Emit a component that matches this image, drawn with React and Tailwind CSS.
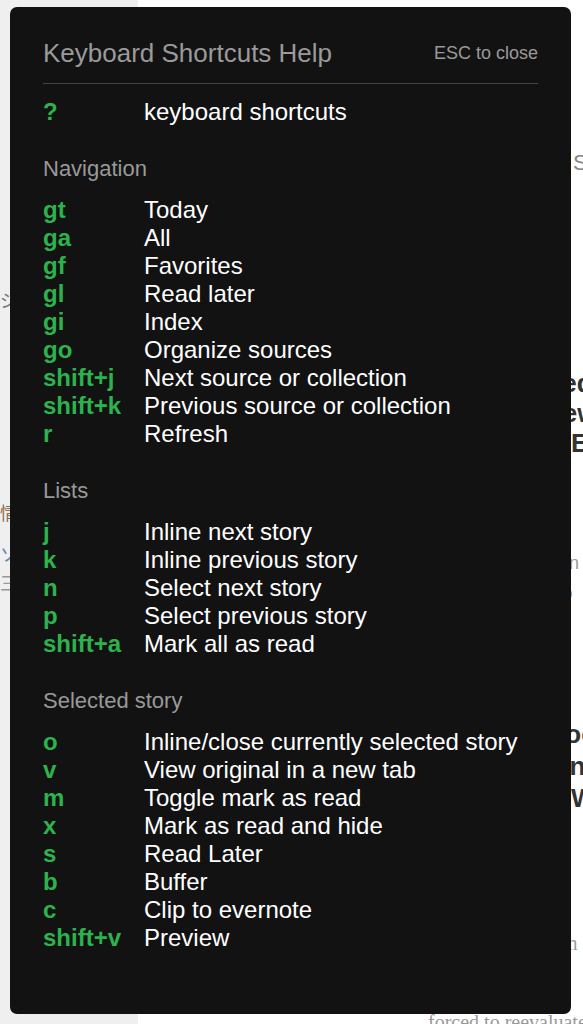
const sections = [
  {
    title: null,
    rows: [["?", "keyboard shortcuts"]],
  },
  {
    title: "Navigation",
    rows: [
      ["gt", "Today"],
      ["ga", "All"],
      ["gf", "Favorites"],
      ["gl", "Read later"],
      ["gi", "Index"],
      ["go", "Organize sources"],
      ["shift+j", "Next source or collection"],
      ["shift+k", "Previous source or collection"],
      ["r", "Refresh"],
    ],
  },
  {
    title: "Lists",
    rows: [
      ["j", "Inline next story"],
      ["k", "Inline previous story"],
      ["n", "Select next story"],
      ["p", "Select previous story"],
      ["shift+a", "Mark all as read"],
    ],
  },
  {
    title: "Selected story",
    rows: [
      ["o", "Inline/close currently selected story"],
      ["v", "View original in a new tab"],
      ["m", "Toggle mark as read"],
      ["x", "Mark as read and hide"],
      ["s", "Read Later"],
      ["b", "Buffer"],
      ["c", "Clip to evernote"],
      ["shift+v", "Preview"],
    ],
  },
];

function Background() {
  return (
    <div className="flex h-[1024px] overflow-hidden">
      <aside className="w-[138px] shrink-0 bg-[#efefef] font-['Noto_Sans_CJK_JP',sans-serif] text-[18px] text-[#777]">
        <p className="mt-[286px]">ジャーナル</p>
        <p className="mt-[186px] text-[#8a6a4a]">情報デザイン</p>
        <p className="mt-[14px] text-[#5a8ab0]">ソパ</p>
        <p className="mt-[2px] text-[#999]">三 設定</p>
      </aside>
      <main className="flex-1 bg-white pl-[290px] font-['Liberation_Sans',sans-serif] whitespace-nowrap">
        <p className="mt-[146px] pl-[145px] text-[22px] text-[#888]">Stories</p>
        <div className="mt-[189px] text-[26px] font-bold leading-[30px] text-[#333]">
          <p>How we used a close</p>
          <p>Startup's new up</p>
          <p className="pl-[143px]">Ed</p>
        </div>
        <div className="mt-[60px] text-[18px] leading-[30px] text-[#999]">
          <p>TechCrunch / 2h</p>
          <p>The new version in</p>
          <p>A look at what's to</p>
          <p>and a plan in the</p>
          <p>the data</p>
        </div>
        <div className="mt-[50px] text-[26px] font-bold leading-[32px] text-[#333]">
          <p>How Facebook is</p>
          <p>Reach Journalists</p>
          <p className="pl-[143px]">W</p>
        </div>
        <div className="mt-[64px] font-['Liberation_Serif',serif] text-[20px] leading-[26px] text-[#999]">
          <p>NiemanLab / 3h</p>
          <p>Newsrooms are</p>
          <p>in the organization</p>
          <p className="mt-[14px] leading-[22px]">The news have</p>
          <p className="leading-[20px]">on Facebook Jo</p>
          <p className="leading-[20px]">forced to reevaluate</p>
        </div>
      </main>
    </div>
  );
}

export default function App() {
  return (
    <div className="relative h-[1024px] w-full overflow-hidden">
      <Background />
      <div className="absolute left-[10px] top-[7px] w-[561px] rounded-[7px] bg-[#121212] pb-[62px] pl-[33px] pr-[33px] pt-[30px] font-['Liberation_Sans',Arial,sans-serif]">
        <div className="flex items-center justify-between border-b border-[#444] pb-[14px]">
          <h2 className="text-[26px] leading-[32px] text-[#9a9a9a]">Keyboard Shortcuts Help</h2>
          <span className="text-[18px] leading-[32px] text-[#9a9a9a]">ESC to close</span>
        </div>
        <div className="mt-[14px]">
          {sections.map((section, i) => (
            <div key={i} className={i > 0 ? "mt-[29px]" : ""}>
              {section.title && (
                <h3 className="mb-[13px] text-[22px] leading-[28px] text-[#999]">{section.title}</h3>
              )}
              {section.rows.map(([key, label]) => (
                <div key={key} className="flex text-[24px] leading-[28px]">
                  <span className="w-[101px] shrink-0 font-bold text-[#2db34d]">{key}</span>
                  <span className="text-white">{label}</span>
                </div>
              ))}
            </div>
          ))}
        </div>
      </div>
    </div>
  );
}
